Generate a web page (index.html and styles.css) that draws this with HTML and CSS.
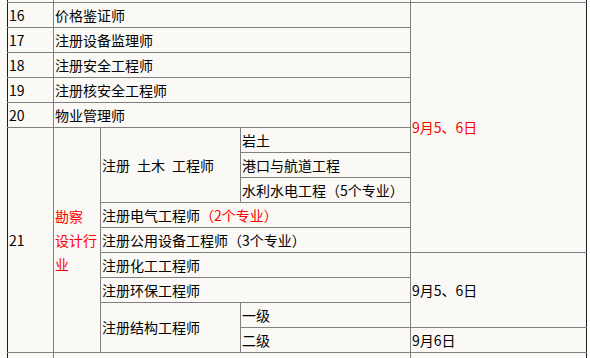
FILE: index.html
```html
<!DOCTYPE html>
<html lang="zh-CN">
<head>
<meta charset="utf-8">
<title>考试时间表</title>
<link rel="stylesheet" href="styles.css">
</head>
<body>
<div class="page">
<table class="exam">
  <colgroup>
    <col class="c-num">
    <col class="c-cat">
    <col class="c-name">
    <col class="c-sub">
    <col class="c-date">
  </colgroup>
  <tbody>
    <tr>
      <td class="num"></td>
      <td colspan="3"></td>
      <td class="date"></td>
    </tr>
    <tr>
      <td class="num">16</td>
      <td colspan="3">价格鉴证师</td>
      <td class="date" rowspan="10"><span class="red">9月5、6日</span></td>
    </tr>
    <tr>
      <td class="num">17</td>
      <td colspan="3">注册设备监理师</td>
    </tr>
    <tr>
      <td class="num">18</td>
      <td colspan="3">注册安全工程师</td>
    </tr>
    <tr>
      <td class="num">19</td>
      <td colspan="3">注册核安全工程师</td>
    </tr>
    <tr>
      <td class="num">20</td>
      <td colspan="3">物业管理师</td>
    </tr>
    <tr>
      <td class="num" rowspan="9">21</td>
      <td class="cat red" rowspan="9">勘察<br>设计行<br>业</td>
      <td rowspan="3">注册&ensp;土木&ensp;工程师</td>
      <td>岩土</td>
    </tr>
    <tr>
      <td>港口与航道工程</td>
    </tr>
    <tr>
      <td>水利水电工程（5个专业）</td>
    </tr>
    <tr>
      <td colspan="2">注册电气工程师<span class="red">（2个专业）</span></td>
    </tr>
    <tr>
      <td colspan="2">注册公用设备工程师（3个专业）</td>
    </tr>
    <tr>
      <td colspan="2">注册化工工程师</td>
      <td class="date" rowspan="3">9月5、6日</td>
    </tr>
    <tr>
      <td colspan="2">注册环保工程师</td>
    </tr>
    <tr>
      <td rowspan="2">注册结构工程师</td>
      <td>一级</td>
    </tr>
    <tr>
      <td>二级</td>
      <td class="date">9月6日</td>
    </tr>
    <tr>
      <td class="num"></td>
      <td colspan="3"></td>
      <td class="date"></td>
    </tr>
  </tbody>
</table>
</div>
</body>
</html>
```

FILE: styles.css
```css
html {
  background: #ffffff;
}

body {
  margin: 0;
  font-family: "Noto Sans CJK SC", "Noto Sans", sans-serif;
  font-size: 14px;
  color: #000000;
}

.page {
  width: max-content;
  padding-left: 7px;
  background: #faf9f5;
  overflow: hidden;
}

.exam {
  border-collapse: collapse;
  table-layout: fixed;
  width: 580px;
  margin-top: -23px;
  background: #faf9f5;
}

.c-num { width: 46px; }
.c-cat { width: 47px; }
.c-name { width: 140px; }
.c-sub { width: 170px; }
.c-date { width: 176px; }

.exam td {
  border: 1px solid #808080;
  height: 24px;
  padding: 0 1px;
  line-height: 23px;
  vertical-align: middle;
  white-space: nowrap;
  overflow: hidden;
}

.exam td.num {
  border-left: 1px solid #1c1c1c;
}

.exam td.date {
  border-right: 1px solid #1c1c1c;
}

.exam td.cat {
  white-space: normal;
  line-height: 24px;
}

.red {
  color: #ff0000;
}
```
